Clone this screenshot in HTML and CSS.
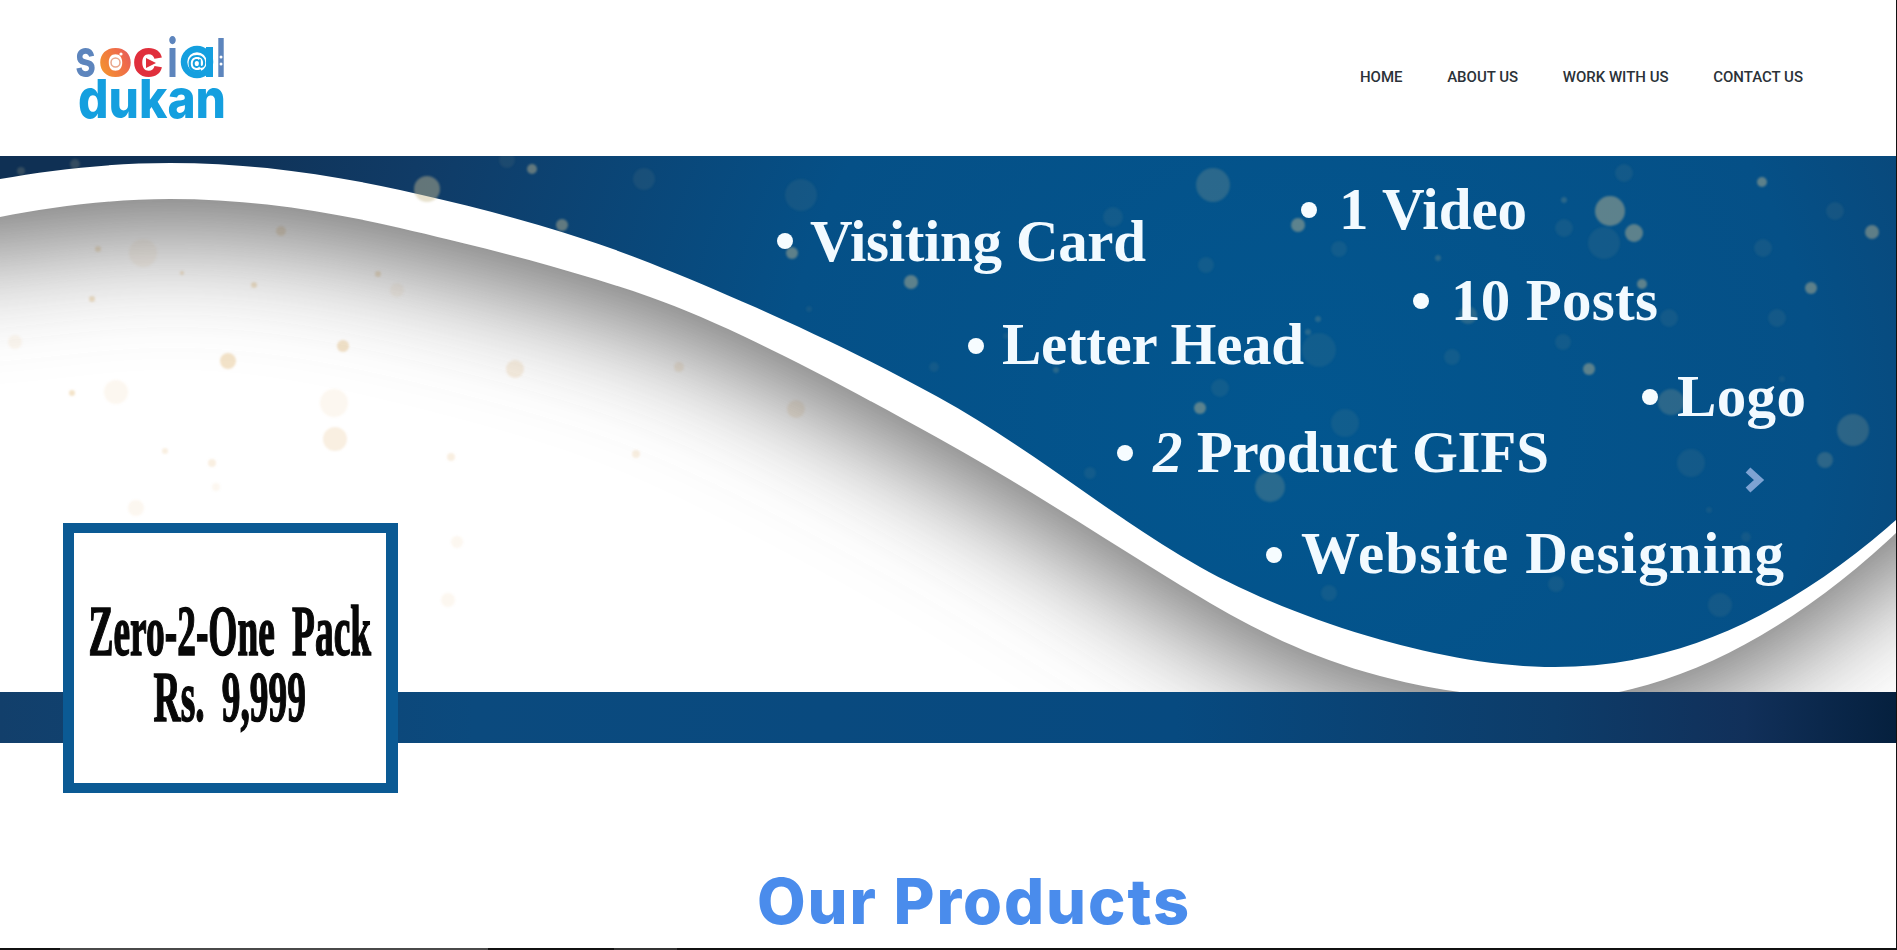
FILE: index.html
```html
<!DOCTYPE html>
<html>

<head>
  <title>Social Dukan</title>
  <meta charset="utf-8" />
  <link rel="stylesheet" href="styles.css">
</head>

<body>
  <div class="page">
    <header class="header">
      <svg class="logo" viewBox="74 36 152 84" aria-label="social dukan">
        <defs>
          <linearGradient id="ring" x1="0" y1="1" x2="1" y2="0">
            <stop offset="0" stop-color="#f5a623" />
            <stop offset="0.6" stop-color="#ef6a4a" />
            <stop offset="1" stop-color="#c9447e" />
          </linearGradient>
        </defs>
        <text class="logo-big logo-grey" x="75" y="77" textLength="21" lengthAdjust="spacingAndGlyphs">s</text>
        <text class="logo-big logo-ring" x="98" y="77" textLength="35" lengthAdjust="spacingAndGlyphs">o</text>
        <circle cx="115.5" cy="62.5" r="4.5" fill="none" stroke="#e9a58a" stroke-width="1.5" />
        <circle cx="121" cy="54" r="1.6" fill="#fff" />
        <text class="logo-big logo-red" x="132" y="77" textLength="32" lengthAdjust="spacingAndGlyphs">c</text>
        <path d="M146 58 L156 63 L146 68 Z" fill="#e02f3c" />
        <text class="logo-big logo-grey" x="167" y="77" textLength="11" lengthAdjust="spacingAndGlyphs">i</text>
        <circle cx="197" cy="62" r="13" fill="none" stroke="#149fdf" stroke-width="6.5" />
        <rect x="206" y="47" width="7" height="30" fill="#149fdf" />
        <text class="logo-at" x="197" y="68">@</text>
        <text class="logo-big logo-grey" x="216" y="77" textLength="10" lengthAdjust="spacingAndGlyphs">l</text>
        <circle cx="221" cy="57" r="1.5" fill="#fff" />
        <circle cx="221" cy="64" r="1.5" fill="#fff" />
        <text class="logo-big logo-blue logo-heavy" x="78" y="118" textLength="148" lengthAdjust="spacingAndGlyphs">dukan</text>
        <circle cx="212" cy="105" r="2" fill="#fff" />
      </svg>
      <nav class="nav">
        <a href="#">HOME</a>
        <a href="#">ABOUT US</a>
        <a href="#">WORK WITH US</a>
        <a href="#">CONTACT US</a>
      </nav>
    </header>

    <section class="slider">
      <svg class="slide" viewBox="0 156 1896 664">
        <defs>
          <radialGradient id="sea" gradientUnits="userSpaceOnUse" cx="1300" cy="420" r="1150">
            <stop offset="0" stop-color="#02568f" />
            <stop offset="0.45" stop-color="#055087" />
            <stop offset="0.8" stop-color="#103b66" />
            <stop offset="1" stop-color="#0f3054" />
          </radialGradient>
          <linearGradient id="bar" x1="0" y1="0" x2="1" y2="0">
            <stop offset="0" stop-color="#123f6b" />
            <stop offset="0.25" stop-color="#0b4a7e" />
            <stop offset="0.62" stop-color="#074a80" />
            <stop offset="0.82" stop-color="#0d3c69" />
            <stop offset="0.92" stop-color="#11305a" />
            <stop offset="1" stop-color="#05203e" />
          </linearGradient>
          <filter id="soft" filterUnits="userSpaceOnUse" x="-400" y="-300" width="2800" height="1600">
            <feGaussianBlur stdDeviation="58" />
          </filter>
          <filter id="spot" filterUnits="userSpaceOnUse" x="0" y="100" width="1900" height="800">
            <feGaussianBlur stdDeviation="0.9" />
          </filter>
        </defs>

        <rect x="0" y="156" width="1896" height="664" fill="#fff" />

        <!-- specks on the white part -->
        <g class="specks-light" filter="url(#spot)">
          <circle class="w1" cx="281" cy="231" r="5" />
          <circle class="w3" cx="143" cy="253" r="14" />
          <circle class="w1" cx="98" cy="249" r="3" />
          <circle class="w1" cx="182" cy="273" r="2" />
          <circle class="w1" cx="254" cy="285" r="3" />
          <circle class="w1" cx="92" cy="299" r="3" />
          <circle class="w1" cx="378" cy="274" r="3" />
          <circle class="w3" cx="397" cy="290" r="7" />
          <circle class="w3" cx="15" cy="342" r="7" />
          <circle class="w1" cx="343" cy="346" r="6" />
          <circle class="w1" cx="228" cy="361" r="8" />
          <circle class="w2" cx="515" cy="369" r="9" />
          <circle class="w2" cx="679" cy="367" r="5" />
          <circle class="w1" cx="72" cy="393" r="3" />
          <circle class="w3" cx="116" cy="392" r="12" />
          <circle class="w3" cx="334" cy="403" r="14" />
          <circle class="w2" cx="335" cy="439" r="12" />
          <circle class="w2" cx="796" cy="409" r="9" />
          <circle class="w2" cx="165" cy="451" r="3" />
          <circle class="w2" cx="212" cy="463" r="4" />
          <circle class="w2" cx="451" cy="457" r="4" />
          <circle class="w2" cx="636" cy="454" r="4" />
          <circle class="w3" cx="216" cy="487" r="4" />
          <circle class="w3" cx="136" cy="508" r="8" />
          <circle class="w3" cx="457" cy="542" r="6" />
          <circle class="w3" cx="448" cy="600" r="7" />
        </g>

        <!-- shadow under the white band -->
        <path class="band-shadow" filter="url(#soft)" transform="translate(0 30)" d="M-400 230 L0 217 C50 207 110 199 170 199 C247 199 323 210 400 228 C477 246 567 268 650 297 C733 326 842 385 938 438 C1034 491 1113 545 1200 597 C1287 649 1380 692 1545 700 C1660 700 1782 640 1896 533 L2300 300 L2300 -300 L-400 -300 Z" />
        <path class="band" d="M0 217 C50 207 110 199 170 199 C247 199 323 210 400 228 C477 246 567 268 650 297 C733 326 842 385 938 438 C1034 491 1113 545 1200 597 C1287 649 1380 692 1545 700 C1660 700 1782 640 1896 533 L1896 156 L0 156 Z" />
        <path class="sea" d="M0 179 C50 170 110 163 170 163 C247 163 323 173 400 190 C477 207 567 230 650 263 C733 296 842 344 938 397 C1034 450 1113 518 1200 567 C1287 616 1437 667 1555 667 C1673 667 1782 620 1896 520 L1896 156 L0 156 Z" />

        <!-- specks on the blue part -->
        <g class="specks-dark" filter="url(#spot)">
          <circle class="b2" cx="21" cy="171" r="4" />
          <circle class="b2" cx="75" cy="164" r="5" />
          <circle class="b1" cx="427" cy="189" r="13" />
          <circle class="b1" cx="532" cy="169" r="5" />
          <circle class="b1" cx="562" cy="225" r="6" />
          <circle class="b3" cx="644" cy="179" r="11" />
          <circle class="b3" cx="507" cy="160" r="8" />
          <circle class="b3" cx="801" cy="195" r="16" />
          <circle class="b2" cx="1213" cy="185" r="17" />
          <circle class="b1" cx="792" cy="253" r="6" />
          <circle class="b1" cx="911" cy="282" r="7" />
          <circle class="b3" cx="809" cy="309" r="3" />
          <circle class="b3" cx="1113" cy="217" r="10" />
          <circle class="b1" cx="1298" cy="225" r="7" />
          <circle class="b3" cx="1339" cy="249" r="8" />
          <circle class="b3" cx="1206" cy="265" r="8" />
          <circle class="b3" cx="934" cy="367" r="5" />
          <circle class="b2" cx="1056" cy="370" r="3" />
          <circle class="b2" cx="1318" cy="319" r="3" />
          <circle class="b2" cx="1308" cy="332" r="3" />
          <circle class="b3" cx="1319" cy="350" r="17" />
          <circle class="b1" cx="1200" cy="408" r="6" />
          <circle class="b3" cx="1220" cy="388" r="9" />
          <circle class="b3" cx="1090" cy="473" r="6" />
          <circle class="b2" cx="1270" cy="487" r="15" />
          <circle class="b3" cx="1006" cy="336" r="3" />
          <circle class="b3" cx="1345" cy="423" r="14" />
          <circle class="b3" cx="1624" cy="173" r="9" />
          <circle class="b2" cx="1564" cy="200" r="3" />
          <circle class="b1" cx="1610" cy="211" r="15" />
          <circle class="b1" cx="1634" cy="233" r="9" />
          <circle class="b3" cx="1604" cy="243" r="16" />
          <circle class="b3" cx="1564" cy="228" r="9" />
          <circle class="b1" cx="1762" cy="182" r="5" />
          <circle class="b1" cx="1872" cy="232" r="7" />
          <circle class="b3" cx="1835" cy="211" r="9" />
          <circle class="b3" cx="1763" cy="248" r="9" />
          <circle class="b2" cx="1438" cy="258" r="3" />
          <circle class="b1" cx="1811" cy="288" r="6" />
          <circle class="b1" cx="1642" cy="284" r="5" />
          <circle class="b2" cx="1468" cy="315" r="9" />
          <circle class="b3" cx="1493" cy="284" r="3" />
          <circle class="b3" cx="1669" cy="318" r="9" />
          <circle class="b3" cx="1777" cy="318" r="9" />
          <circle class="b1" cx="1589" cy="369" r="6" />
          <circle class="b2" cx="1671" cy="402" r="13" />
          <circle class="b3" cx="1782" cy="379" r="3" />
          <circle class="b2" cx="1853" cy="430" r="16" />
          <circle class="b2" cx="1825" cy="460" r="8" />
          <circle class="b3" cx="1452" cy="357" r="8" />
          <circle class="b3" cx="1563" cy="342" r="8" />
          <circle class="b3" cx="1709" cy="510" r="3" />
          <circle class="b3" cx="1746" cy="537" r="5" />
          <circle class="b3" cx="1556" cy="584" r="8" />
          <circle class="b3" cx="1329" cy="593" r="8" />
          <circle class="b3" cx="1720" cy="605" r="12" />
          <circle class="b3" cx="1691" cy="463" r="14" />
        </g>

        <rect class="bar" x="0" y="692" width="1896" height="51" />
        <rect x="0" y="743" width="1896" height="77" fill="#fff" />

        <g class="bullets">
          <circle cx="785" cy="241" r="8" />
          <circle cx="976" cy="346" r="8" />
          <circle cx="1125" cy="453" r="8" />
          <circle cx="1309" cy="210" r="8" />
          <circle cx="1421" cy="301" r="8" />
          <circle cx="1650" cy="397" r="8" />
          <circle cx="1274" cy="555" r="8" />
        </g>
        <text class="item" x="810" y="261" textLength="336">Visiting Card</text>
        <text class="item" x="1002" y="364" textLength="302">Letter Head</text>
        <text class="item" x="1153" y="472" textLength="396"><tspan class="item-num">2</tspan> Product GIFS</text>
        <text class="item" x="1339" y="229" textLength="188">1 Video</text>
        <text class="item" x="1451" y="320" textLength="207">10 Posts</text>
        <text class="item" x="1677" y="416" textLength="129">Logo</text>
        <text class="item" x="1301" y="573" textLength="483">Website Designing</text>

        <path class="next" d="M1748 470 L1759 480 L1748 490" />
      </svg>

      <div class="pack">
        <div class="pack-text">
          <div>Zero-2-One Pack</div>
          <div>Rs. 9,999</div>
        </div>
      </div>
    </section>

    <h2 class="title">Our Products</h2>

    <div class="edge">
      <span class="edge-a"></span>
      <span class="edge-b"></span>
      <span class="edge-a2"></span>
      <span class="edge-c"></span>
    </div>
  </div>
</body>

</html>
```

FILE: styles.css
```css
html,
body {
  margin: 0;
  padding: 0;
  height: 100%;
  overflow: hidden;
  background: #fff;
}
.page {
  width: 1896px;
  height: 950px;
  border-right: 1px solid #111;
  display: flex;
  flex-direction: column;
}

/* header */
.header {
  height: 156px;
  flex: none;
  display: flex;
  align-items: center;
  justify-content: space-between;
  padding: 0 93px 0 74px;
}
.logo {
  width: 152px;
  height: 84px;
  overflow: visible;
  filter: blur(0.5px);
}
.logo-big {
  font-family: Inter, "Liberation Sans", sans-serif;
  font-weight: 700;
  font-size: 54px;
}
.logo-heavy {
  font-weight: 800;
}
.logo-grey {
  fill: #5d85bd;
}
.logo-ring {
  fill: url(#ring);
}
.logo-red {
  fill: #e02f3c;
}
.logo-blue {
  fill: #149fdf;
}
.logo-at {
  font-family: Inter, "Liberation Sans", sans-serif;
  font-weight: 700;
  font-size: 18px;
  fill: #149fdf;
  text-anchor: middle;
}
.nav {
  display: flex;
  gap: 44.6px;
  margin-bottom: 2px;
}
.nav a {
  font-family: Roboto, "Liberation Sans", sans-serif;
  font-size: 15px;
  font-weight: 500;
  color: #2b3238;
  text-decoration: none;
  white-space: nowrap;
}

/* slider */
.slider {
  position: relative;
  height: 664px;
  flex: none;
}
.slide {
  display: block;
  width: 1896px;
  height: 664px;
}
.band-shadow {
  fill: #6c6c6c;
}
.band {
  fill: #fff;
}
.sea {
  fill: url(#sea);
}
.bar {
  fill: url(#bar);
}
.specks-light {
  fill: #e2b877;
}
.w1 {
  opacity: 0.4;
}
.w2 {
  opacity: 0.22;
}
.w3 {
  opacity: 0.11;
}
.specks-dark {
  fill: #c9bd90;
}
.b1 {
  opacity: 0.45;
}
.b2 {
  opacity: 0.2;
}
.b3 {
  opacity: 0.08;
}
.bullets {
  fill: #f6fcff;
}
.item {
  font-family: "Liberation Serif", serif;
  font-weight: bold;
  font-size: 59px;
  fill: #f2faff;
}
.item-num {
  font-style: italic;
}
.next {
  fill: none;
  stroke: #7ea3d3;
  stroke-width: 7px;
}

/* price box over the slide */
.pack {
  position: absolute;
  left: 63px;
  top: 367px;
  width: 335px;
  height: 270px;
  box-sizing: border-box;
  border: 10px solid #0b5a94;
  border-left-width: 11px;
  border-right-width: 12px;
  padding-top: 12px;
  background: #fff;
  display: flex;
  align-items: center;
  justify-content: center;
}
.pack-text {
  font-family: "Liberation Serif", serif;
  font-weight: bold;
  font-size: 72px;
  line-height: 66px;
  word-spacing: 15px;
  color: #080808;
  -webkit-text-stroke: 1.6px #080808;
  text-align: center;
  white-space: nowrap;
  transform: scaleX(0.52);
  margin: 0 -200px;
}

/* section title */
.title {
  margin: 44px 0 0;
  padding-left: 52px;
  text-align: center;
  font-family: Inter, "Liberation Sans", sans-serif;
  font-weight: 800;
  font-size: 63px;
  letter-spacing: 1.9px;
  line-height: 75px;
  color: #4a8cec;
}

/* dark strip along the bottom of the window */
.edge {
  margin-top: auto;
  height: 2px;
  flex: none;
  display: flex;
  background: #111;
}
.edge-a {
  width: 60px;
}
.edge-b {
  width: 428px;
  background: #4a4a4a;
}
.edge-a2 {
  width: 126px;
}
.edge-c {
  width: 63px;
  background: #333;
}
```
